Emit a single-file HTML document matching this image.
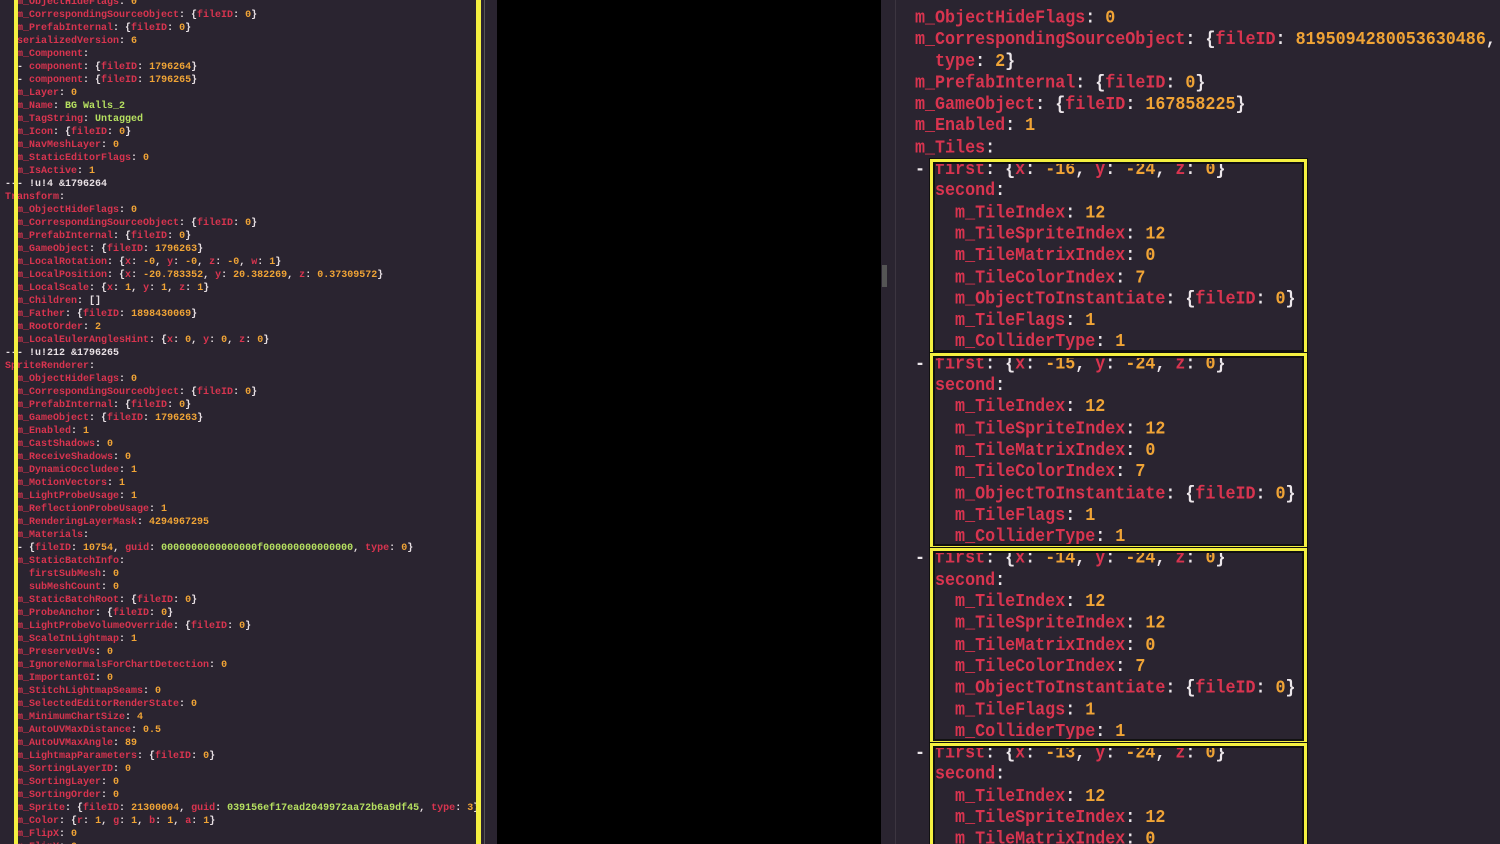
<!DOCTYPE html>
<html><head><meta charset="utf-8"><style>
html,body{margin:0;padding:0;background:#000;width:1500px;height:844px;overflow:hidden}
#L{position:absolute;left:0;top:0;width:497px;height:844px;background:#2a2430;overflow:hidden}
#R{position:absolute;left:881px;top:0;width:619px;height:844px;background:#2a2430;overflow:hidden}
pre{margin:0;font-family:"Liberation Mono",monospace;font-weight:bold;white-space:pre}
#L pre{position:absolute;left:5px;top:-4px;font-size:10px;line-height:13px;color:#e8e0e4}
#R pre{position:absolute;left:34px;top:8px;font-size:16.7px;line-height:19.29px;color:#ece6ea;transform:scaleY(1.12);transform-origin:0 0}
.k{color:#d8344f}.n{color:#f0a436}.g{color:#b6e060}.w{color:#f2eef0}
.yl{position:absolute;top:0;height:844px;background:#f4f040}
.bx{position:absolute;left:49px;width:371px;border:3px solid #f4f040;box-shadow:inset 0 0 0 2px #111,0 0 0 1px #111}
</style></head><body>
<div id="L">
<pre><span class="k">  m_ObjectHideFlags</span>: <span class="n">0</span>
<span class="k">  m_CorrespondingSourceObject</span>: {<span class="k">fileID</span>: <span class="n">0</span>}
<span class="k">  m_PrefabInternal</span>: {<span class="k">fileID</span>: <span class="n">0</span>}
<span class="k">  serializedVersion</span>: <span class="n">6</span>
<span class="k">  m_Component</span>:
  - <span class="k">component</span>: {<span class="k">fileID</span>: <span class="n">1796264</span>}
  - <span class="k">component</span>: {<span class="k">fileID</span>: <span class="n">1796265</span>}
<span class="k">  m_Layer</span>: <span class="n">0</span>
<span class="k">  m_Name</span>: <span class="g">BG Walls_2</span>
<span class="k">  m_TagString</span>: <span class="g">Untagged</span>
<span class="k">  m_Icon</span>: {<span class="k">fileID</span>: <span class="n">0</span>}
<span class="k">  m_NavMeshLayer</span>: <span class="n">0</span>
<span class="k">  m_StaticEditorFlags</span>: <span class="n">0</span>
<span class="k">  m_IsActive</span>: <span class="n">1</span>
--- !u!4 &amp;1796264
<span class="k">Transform</span>:
<span class="k">  m_ObjectHideFlags</span>: <span class="n">0</span>
<span class="k">  m_CorrespondingSourceObject</span>: {<span class="k">fileID</span>: <span class="n">0</span>}
<span class="k">  m_PrefabInternal</span>: {<span class="k">fileID</span>: <span class="n">0</span>}
<span class="k">  m_GameObject</span>: {<span class="k">fileID</span>: <span class="n">1796263</span>}
<span class="k">  m_LocalRotation</span>: {<span class="k">x</span>: <span class="n">-0</span>, <span class="k">y</span>: <span class="n">-0</span>, <span class="k">z</span>: <span class="n">-0</span>, <span class="k">w</span>: <span class="n">1</span>}
<span class="k">  m_LocalPosition</span>: {<span class="k">x</span>: <span class="n">-20.783352</span>, <span class="k">y</span>: <span class="n">20.382269</span>, <span class="k">z</span>: <span class="n">0.37309572</span>}
<span class="k">  m_LocalScale</span>: {<span class="k">x</span>: <span class="n">1</span>, <span class="k">y</span>: <span class="n">1</span>, <span class="k">z</span>: <span class="n">1</span>}
<span class="k">  m_Children</span>: []
<span class="k">  m_Father</span>: {<span class="k">fileID</span>: <span class="n">1898430069</span>}
<span class="k">  m_RootOrder</span>: <span class="n">2</span>
<span class="k">  m_LocalEulerAnglesHint</span>: {<span class="k">x</span>: <span class="n">0</span>, <span class="k">y</span>: <span class="n">0</span>, <span class="k">z</span>: <span class="n">0</span>}
--- !u!212 &amp;1796265
<span class="k">SpriteRenderer</span>:
<span class="k">  m_ObjectHideFlags</span>: <span class="n">0</span>
<span class="k">  m_CorrespondingSourceObject</span>: {<span class="k">fileID</span>: <span class="n">0</span>}
<span class="k">  m_PrefabInternal</span>: {<span class="k">fileID</span>: <span class="n">0</span>}
<span class="k">  m_GameObject</span>: {<span class="k">fileID</span>: <span class="n">1796263</span>}
<span class="k">  m_Enabled</span>: <span class="n">1</span>
<span class="k">  m_CastShadows</span>: <span class="n">0</span>
<span class="k">  m_ReceiveShadows</span>: <span class="n">0</span>
<span class="k">  m_DynamicOccludee</span>: <span class="n">1</span>
<span class="k">  m_MotionVectors</span>: <span class="n">1</span>
<span class="k">  m_LightProbeUsage</span>: <span class="n">1</span>
<span class="k">  m_ReflectionProbeUsage</span>: <span class="n">1</span>
<span class="k">  m_RenderingLayerMask</span>: <span class="n">4294967295</span>
<span class="k">  m_Materials</span>:
  - {<span class="k">fileID</span>: <span class="n">10754</span>, <span class="k">guid</span>: <span class="g">0000000000000000f000000000000000</span>, <span class="k">type</span>: <span class="n">0</span>}
<span class="k">  m_StaticBatchInfo</span>:
<span class="k">    firstSubMesh</span>: <span class="n">0</span>
<span class="k">    subMeshCount</span>: <span class="n">0</span>
<span class="k">  m_StaticBatchRoot</span>: {<span class="k">fileID</span>: <span class="n">0</span>}
<span class="k">  m_ProbeAnchor</span>: {<span class="k">fileID</span>: <span class="n">0</span>}
<span class="k">  m_LightProbeVolumeOverride</span>: {<span class="k">fileID</span>: <span class="n">0</span>}
<span class="k">  m_ScaleInLightmap</span>: <span class="n">1</span>
<span class="k">  m_PreserveUVs</span>: <span class="n">0</span>
<span class="k">  m_IgnoreNormalsForChartDetection</span>: <span class="n">0</span>
<span class="k">  m_ImportantGI</span>: <span class="n">0</span>
<span class="k">  m_StitchLightmapSeams</span>: <span class="n">0</span>
<span class="k">  m_SelectedEditorRenderState</span>: <span class="n">0</span>
<span class="k">  m_MinimumChartSize</span>: <span class="n">4</span>
<span class="k">  m_AutoUVMaxDistance</span>: <span class="n">0.5</span>
<span class="k">  m_AutoUVMaxAngle</span>: <span class="n">89</span>
<span class="k">  m_LightmapParameters</span>: {<span class="k">fileID</span>: <span class="n">0</span>}
<span class="k">  m_SortingLayerID</span>: <span class="n">0</span>
<span class="k">  m_SortingLayer</span>: <span class="n">0</span>
<span class="k">  m_SortingOrder</span>: <span class="n">0</span>
<span class="k">  m_Sprite</span>: {<span class="k">fileID</span>: <span class="n">21300004</span>, <span class="k">guid</span>: <span class="g">039156ef17ead2049972aa72b6a9df45</span>, <span class="k">type</span>: <span class="n">3</span>}
<span class="k">  m_Color</span>: {<span class="k">r</span>: <span class="n">1</span>, <span class="k">g</span>: <span class="n">1</span>, <span class="k">b</span>: <span class="n">1</span>, <span class="k">a</span>: <span class="n">1</span>}
<span class="k">  m_FlipX</span>: <span class="n">0</span>
<span class="k">  m_FlipY</span>: <span class="n">0</span></pre>
<div class="yl" style="left:14px;width:4px"></div>
<div class="yl" style="left:476px;width:5px"></div>
<div style="position:absolute;left:484px;top:0;width:1px;height:844px;background:#555"></div>
</div>
<div id="R">
<div style="position:absolute;left:14px;top:0;width:1px;height:844px;background:#3c3540"></div>
<div style="position:absolute;left:1px;top:265px;width:5px;height:22px;background:#555"></div>
<pre><span class="k">m_ObjectHideFlags</span>: <span class="n">0</span>
<span class="k">m_CorrespondingSourceObject</span>: {<span class="k">fileID</span>: <span class="n">8195094280053630486</span>,
<span class="k">  type</span>: <span class="n">2</span>}
<span class="k">m_PrefabInternal</span>: {<span class="k">fileID</span>: <span class="n">0</span>}
<span class="k">m_GameObject</span>: {<span class="k">fileID</span>: <span class="n">167858225</span>}
<span class="k">m_Enabled</span>: <span class="n">1</span>
<span class="k">m_Tiles</span>:
- <span class="k">first</span>: {<span class="k">x</span>: <span class="n">-16</span>, <span class="k">y</span>: <span class="n">-24</span>, <span class="k">z</span>: <span class="n">0</span>}
<span class="k">  second</span>:
<span class="k">    m_TileIndex</span>: <span class="n">12</span>
<span class="k">    m_TileSpriteIndex</span>: <span class="n">12</span>
<span class="k">    m_TileMatrixIndex</span>: <span class="n">0</span>
<span class="k">    m_TileColorIndex</span>: <span class="n">7</span>
<span class="k">    m_ObjectToInstantiate</span>: {<span class="k">fileID</span>: <span class="n">0</span>}
<span class="k">    m_TileFlags</span>: <span class="n">1</span>
<span class="k">    m_ColliderType</span>: <span class="n">1</span>
- <span class="k">first</span>: {<span class="k">x</span>: <span class="n">-15</span>, <span class="k">y</span>: <span class="n">-24</span>, <span class="k">z</span>: <span class="n">0</span>}
<span class="k">  second</span>:
<span class="k">    m_TileIndex</span>: <span class="n">12</span>
<span class="k">    m_TileSpriteIndex</span>: <span class="n">12</span>
<span class="k">    m_TileMatrixIndex</span>: <span class="n">0</span>
<span class="k">    m_TileColorIndex</span>: <span class="n">7</span>
<span class="k">    m_ObjectToInstantiate</span>: {<span class="k">fileID</span>: <span class="n">0</span>}
<span class="k">    m_TileFlags</span>: <span class="n">1</span>
<span class="k">    m_ColliderType</span>: <span class="n">1</span>
- <span class="k">first</span>: {<span class="k">x</span>: <span class="n">-14</span>, <span class="k">y</span>: <span class="n">-24</span>, <span class="k">z</span>: <span class="n">0</span>}
<span class="k">  second</span>:
<span class="k">    m_TileIndex</span>: <span class="n">12</span>
<span class="k">    m_TileSpriteIndex</span>: <span class="n">12</span>
<span class="k">    m_TileMatrixIndex</span>: <span class="n">0</span>
<span class="k">    m_TileColorIndex</span>: <span class="n">7</span>
<span class="k">    m_ObjectToInstantiate</span>: {<span class="k">fileID</span>: <span class="n">0</span>}
<span class="k">    m_TileFlags</span>: <span class="n">1</span>
<span class="k">    m_ColliderType</span>: <span class="n">1</span>
- <span class="k">first</span>: {<span class="k">x</span>: <span class="n">-13</span>, <span class="k">y</span>: <span class="n">-24</span>, <span class="k">z</span>: <span class="n">0</span>}
<span class="k">  second</span>:
<span class="k">    m_TileIndex</span>: <span class="n">12</span>
<span class="k">    m_TileSpriteIndex</span>: <span class="n">12</span>
<span class="k">    m_TileMatrixIndex</span>: <span class="n">0</span></pre>
<div class="bx" style="top:159px;height:190px"></div>
<div class="bx" style="top:353px;height:190px"></div>
<div class="bx" style="top:548px;height:190px"></div>
<div class="bx" style="top:743px;height:200px"></div>
</div>
</body></html>
